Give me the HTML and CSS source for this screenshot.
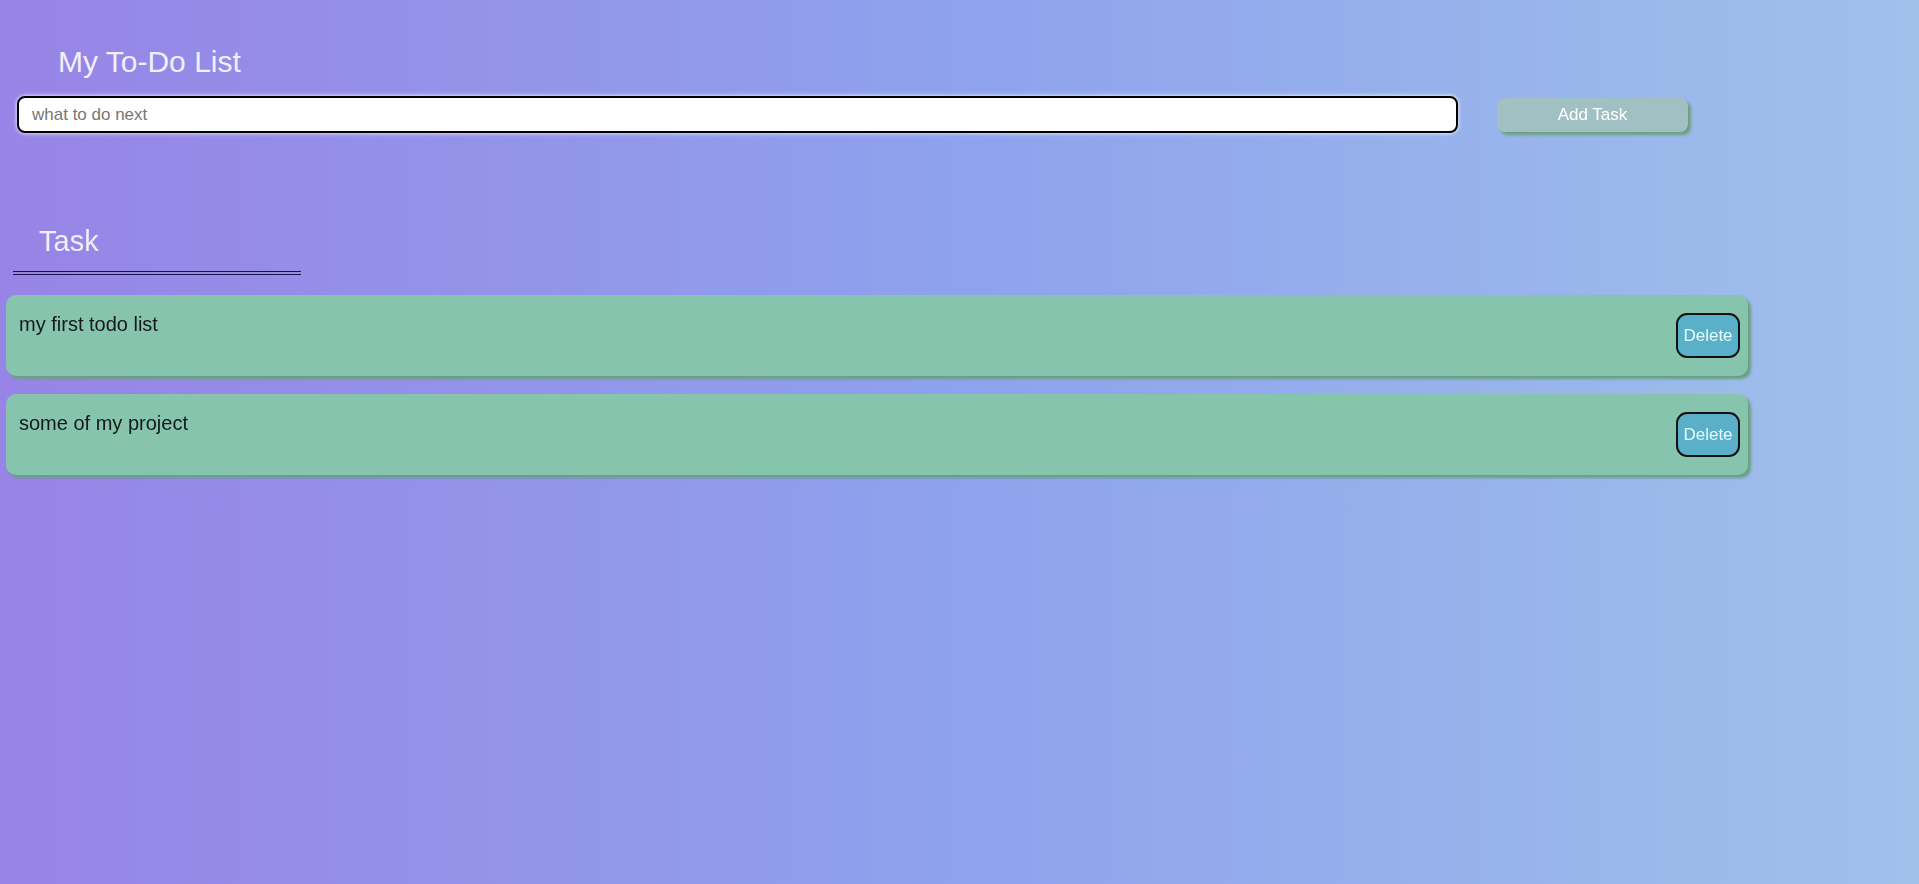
FILE: index.html
```html
<!DOCTYPE html>
<html lang="en">
<head>
<meta charset="utf-8">
<title>My To-Do List</title>
<link rel="stylesheet" href="styles.css">
</head>
<body>
  <h1 class="title">My To-Do List</h1>
  <div class="add-row">
    <input class="task-input" type="text" placeholder="what to do next" autofocus>
    <button class="add-btn">Add Task</button>
  </div>
  <h2 class="section-title">Task</h2>
  <div class="section-rule"></div>
  <ul class="task-list">
    <li class="task-card">
      <span class="task-text">my first todo list</span>
      <button class="delete-btn">Delete</button>
    </li>
    <li class="task-card">
      <span class="task-text">some of my project</span>
      <button class="delete-btn">Delete</button>
    </li>
  </ul>
</body>
</html>
```
FILE: styles.css
```css
html {
  min-height: 100%;
  background: linear-gradient(to right, #9884e6 0%, #8ea2ed 50%, #9fc1ea 100%);
}

body {
  margin: 0;
  min-height: 100vh;
  font-family: "Liberation Sans", Arial, sans-serif;
}

.title {
  margin: 0;
  padding: 45px 0 0 58px;
  font-size: 30px;
  line-height: 34px;
  font-weight: normal;
  color: #eff0fb;
}

.add-row {
  display: flex;
  align-items: center;
  margin-top: 17px;
  padding-left: 17px;
  gap: 39px;
}

.task-input {
  box-sizing: border-box;
  width: 1441px;
  height: 37px;
  border: 2px solid #000;
  border-radius: 8px;
  background: #fff;
  box-shadow: 0 0 4px #fff;
  padding: 0 13px;
  font-family: "Liberation Sans", Arial, sans-serif;
  font-size: 17px;
  color: #222;
  outline: none;
  caret-color: #000;
}

.task-input::placeholder {
  color: #767676;
}

.add-btn {
  box-sizing: border-box;
  width: 191px;
  height: 34px;
  border: none;
  border-radius: 8px;
  background: #a0c0c4;
  box-shadow: 3px 3px 3px #6d9f7e;
  color: #fff;
  font-family: "Liberation Sans", Arial, sans-serif;
  font-size: 17px;
  padding: 0;
}

.section-title {
  margin: 92px 0 0;
  padding-left: 39px;
  font-size: 29px;
  line-height: 33px;
  font-weight: normal;
  color: #eff0fb;
}

.section-rule {
  width: 288px;
  height: 0;
  margin: 13px 0 0 13px;
  border-bottom: 4px double #161640;
}

.task-list {
  list-style: none;
  margin: 20px 0 0 6px;
  padding: 0;
  display: flex;
  flex-direction: column;
  gap: 18px;
  width: 1742px;
}

.task-card {
  box-sizing: border-box;
  height: 81px;
  display: flex;
  justify-content: space-between;
  align-items: flex-start;
  padding: 18px 8px 0 13px;
  background: #86c4ae;
  border-radius: 10px;
  box-shadow: 3px 3px 3px #68a07f;
}

.task-text {
  font-size: 20px;
  line-height: 23px;
  color: #151a18;
}

.delete-btn {
  align-self: center;
  margin-top: -18px;
  box-sizing: border-box;
  width: 64px;
  height: 45px;
  border: 2px solid #111;
  border-radius: 11px;
  background: #5ab0c8;
  color: #e8fbff;
  font-family: "Liberation Sans", Arial, sans-serif;
  font-size: 17px;
  padding: 0;
}
```
